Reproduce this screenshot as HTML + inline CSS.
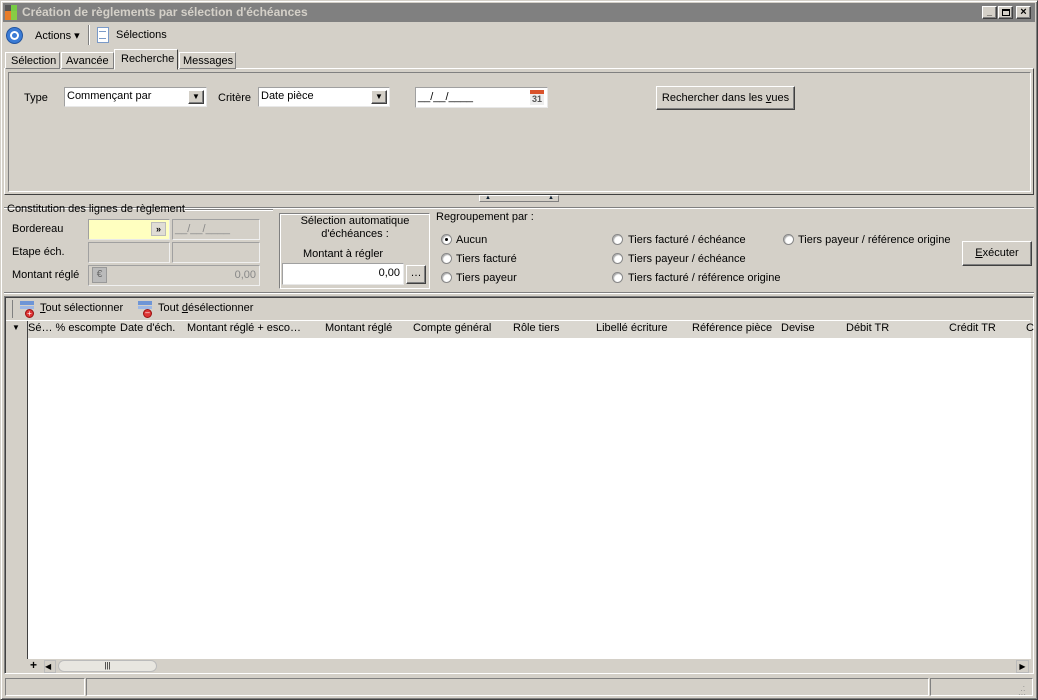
<!DOCTYPE html>
<html><head><meta charset="utf-8"><style>
*{box-sizing:border-box;margin:0;padding:0}
body{width:1038px;height:700px;background:#d4d0c8;font:11px "Liberation Sans",Tahoma,sans-serif;color:#000;position:relative;overflow:hidden}
.a{position:absolute}
.sunk{border:1px solid;border-color:#808080 #fff #fff #808080}
.rais{border:1px solid;border-color:#fff #808080 #808080 #fff}
.btn{border:1px solid;border-color:#fff #404040 #404040 #fff;box-shadow:inset -1px -1px 0 #808080;text-align:center;background:#d4d0c8}
.inp{background:#fff;border:1px solid #d4d0c8;border-color:#a0a0a0 #e8e8e8 #e8e8e8 #a0a0a0}
.dis{border:1px solid;border-color:#a0a0a0 #f0f0f0 #f0f0f0 #a0a0a0}
.rad{width:11px;height:11px;border-radius:50%;background:#fff;border:1px solid #888;box-shadow:inset 1px 1px 1px #aaa}
.t{white-space:nowrap}
</style></head><body>
<!-- window frame -->
<div class="a" style="left:0;top:0;width:1038px;height:700px;border:1px solid;border-color:#d4d0c8 #404040 #404040 #d4d0c8;box-shadow:inset 1px 1px 0 #fff,inset -1px -1px 0 #808080"></div>
<!-- title -->
<div class="a" style="left:3px;top:3px;width:1032px;height:19px;background:#808080"></div>
<div class="a" style="left:5px;top:5px;width:6px;height:6px;background:#555"></div>
<div class="a" style="left:11px;top:5px;width:6px;height:6px;background:#7c4"></div>
<div class="a" style="left:5px;top:11px;width:6px;height:9px;background:#e77d2a"></div>
<div class="a" style="left:11px;top:11px;width:6px;height:9px;background:#8c4"></div>
<div class="a t" style="left:22px;top:5px;color:#d4d0c8;font-weight:bold;font-size:12px">Création de règlements par sélection d'échéances</div>
<div class="a btn" style="left:982px;top:6px;width:15px;height:13px;font-size:9px;line-height:10px;font-weight:bold">_</div>
<div class="a btn" style="left:998px;top:6px;width:15px;height:13px"><div class="a" style="left:3px;top:2px;width:8px;height:7px;border:1px solid #000;border-top-width:2px"></div></div>
<div class="a btn" style="left:1016px;top:6px;width:15px;height:13px;font-size:11px;line-height:11px;font-weight:bold">×</div>
<!-- toolbar -->
<div class="a" style="left:6px;top:27px;width:17px;height:17px;border-radius:50%;background:#3a7bd5;border:1px solid #2456a0"><div class="a" style="left:3px;top:3px;width:9px;height:9px;border-radius:50%;background:#fff"></div><div class="a" style="left:5px;top:5px;width:5px;height:5px;border-radius:50%;background:#3a7bd5"></div></div>
<div class="a t" style="left:35px;top:29px">Actions ▾</div>
<div class="a" style="left:88px;top:25px;width:2px;height:20px;border-left:1px solid #808080;border-right:1px solid #fff"></div>
<div class="a" style="left:97px;top:27px;width:12px;height:16px;background:#fff;border:1px solid #7a9ac8"></div>
<div class="a" style="left:99px;top:31px;width:7px;height:8px;border-top:1px solid #7a9ac8;border-bottom:1px solid #7a9ac8"></div>
<div class="a t" style="left:116px;top:29px">Sélections</div>
<!-- tabs -->
<div class="a" style="left:4px;top:68px;width:1030px;height:127px;border:1px solid;border-color:#fff #404040 #404040 #fff"></div>
<div class="a t rais" style="left:5px;top:52px;width:55px;height:17px;padding:2px 0 0 5px">Sélection</div>
<div class="a t rais" style="left:61px;top:52px;width:53px;height:17px;padding:2px 0 0 4px">Avancée</div>
<div class="a t" style="left:114px;top:49px;width:64px;height:21px;padding:3px 0 0 6px;background:#d4d0c8;border:1px solid;border-color:#fff #404040 transparent #fff">Recherche</div>
<div class="a t rais" style="left:179px;top:52px;width:57px;height:17px;padding:2px 0 0 3px">Messages</div>
<div class="a sunk" style="left:8px;top:72px;width:1023px;height:120px"></div>
<div class="a t" style="left:24px;top:92px">Type</div>
<div class="a inp" style="left:64px;top:87px;width:143px;height:20px;padding:2px 0 0 2px">Commençant par</div>
<div class="a btn" style="left:188px;top:90px;width:16px;height:14px;font-size:8px;line-height:12px">▼</div>
<div class="a t" style="left:218px;top:92px">Critère</div>
<div class="a inp" style="left:258px;top:87px;width:132px;height:20px;padding:2px 0 0 2px">Date pièce</div>
<div class="a btn" style="left:371px;top:90px;width:16px;height:14px;font-size:8px;line-height:12px">▼</div>
<div class="a inp" style="left:415px;top:87px;width:133px;height:21px;padding:3px 0 0 2px">__/__/____</div>
<div class="a" style="left:530px;top:90px;width:14px;height:15px;background:#eee;border-top:4px solid #d9532c;font-size:9px;font-weight:bold;color:#555;text-align:center;line-height:10px">31</div>
<div class="a btn t" style="left:656px;top:86px;width:139px;height:24px;line-height:22px">Rechercher dans les <u>v</u>ues</div>
<!-- splitter -->
<div class="a" style="left:4px;top:207px;width:1030px;height:2px;border-top:1px solid #808080;border-bottom:1px solid #fff"></div>
<div class="a" style="left:479px;top:195px;width:80px;height:7px;border:1px solid;border-color:#fff #808080 #808080 #fff;font-size:6px;color:#123;line-height:5px"><span class="a" style="left:5px">▲</span><span class="a" style="left:68px">▲</span></div>
<!-- constitution -->
<div class="a t" style="left:7px;top:203px">Constitution des lignes de règlement</div>
<div class="a" style="left:185px;top:209px;width:88px;height:2px;border-top:1px solid #808080;border-bottom:1px solid #fff"></div>
<div class="a t" style="left:12px;top:223px">Bordereau</div>
<div class="a" style="left:88px;top:219px;width:82px;height:21px;background:#ffffc0;border:1px solid #a0a0a0;border-right-color:#e8e8e8;border-bottom-color:#e8e8e8"></div>
<div class="a" style="left:151px;top:222px;width:15px;height:14px;background:#e0ddd5;border:1px solid #bbb;font-size:9px;line-height:12px;text-align:center;font-weight:bold">»</div>
<div class="a dis" style="left:172px;top:219px;width:88px;height:21px;padding:3px 0 0 2px;color:#888">__/__/____</div>
<div class="a t" style="left:12px;top:246px">Etape éch.</div>
<div class="a dis" style="left:88px;top:242px;width:82px;height:21px"></div>
<div class="a dis" style="left:172px;top:242px;width:88px;height:21px"></div>
<div class="a t" style="left:12px;top:269px">Montant réglé</div>
<div class="a dis" style="left:88px;top:265px;width:172px;height:21px;padding:3px 3px 0 0;text-align:right;color:#888">0,00</div>
<div class="a" style="left:92px;top:267px;width:15px;height:16px;background:#bbb;border:1px solid #999;color:#666;font-size:10px;text-align:center;line-height:14px">€</div>
<!-- auto selection -->
<div class="a" style="left:279px;top:213px;width:151px;height:76px;border:1px solid;border-color:#808080 #fff #fff #808080;box-shadow:1px 1px 0 #fff inset"></div>
<div class="a" style="left:280px;top:215px;width:150px;text-align:center;line-height:13px">Sélection automatique<br>d'échéances :</div>
<div class="a t" style="left:303px;top:248px">Montant à régler</div>
<div class="a inp" style="left:282px;top:263px;width:122px;height:22px;text-align:right;padding:3px 3px 0 0">0,00</div>
<div class="a btn" style="left:406px;top:265px;width:20px;height:19px;line-height:14px">…</div>
<!-- regroupement -->
<div class="a t" style="left:436px;top:211px">Regroupement par :</div>
<div class="a rad" style="left:441px;top:234px"><div class="a" style="left:3px;top:3px;width:3px;height:3px;background:#000;border-radius:50%"></div></div>
<div class="a t" style="left:456px;top:234px">Aucun</div>
<div class="a rad" style="left:441px;top:253px"></div><div class="a t" style="left:456px;top:253px">Tiers facturé</div>
<div class="a rad" style="left:441px;top:272px"></div><div class="a t" style="left:456px;top:272px">Tiers payeur</div>
<div class="a rad" style="left:612px;top:234px"></div><div class="a t" style="left:628px;top:234px">Tiers facturé / échéance</div>
<div class="a rad" style="left:612px;top:253px"></div><div class="a t" style="left:628px;top:253px">Tiers payeur / échéance</div>
<div class="a rad" style="left:612px;top:272px"></div><div class="a t" style="left:628px;top:272px">Tiers facturé / référence origine</div>
<div class="a rad" style="left:783px;top:234px"></div><div class="a t" style="left:798px;top:234px">Tiers payeur / référence origine</div>
<div class="a btn t" style="left:962px;top:241px;width:70px;height:25px;line-height:23px"><u>E</u>xécuter</div>
<div class="a" style="left:4px;top:292px;width:1030px;height:2px;border-top:1px solid #808080;border-bottom:1px solid #fff"></div>
<!-- grid -->
<div class="a" style="left:4px;top:296px;width:1030px;height:378px;border:1px solid;border-color:#808080 #fff #fff #808080;box-shadow:inset 1px 1px 0 #404040"></div>
<div class="a" style="left:12px;top:300px;width:1px;height:18px;border-left:1px solid #808080"></div>
<div class="a" style="left:6px;top:320px;width:1024px;height:1px;background:#fff"></div>
<div class="a" style="left:20px;top:301px;width:14px;height:4px;background:#6e95d6"></div>
<div class="a" style="left:20px;top:306px;width:14px;height:3px;background:#9db8e6"></div>
<div class="a" style="left:25px;top:309px;width:9px;height:9px;border-radius:50%;background:#d33;border:1px solid #911;color:#fff;font-size:8px;line-height:7px;text-align:center">+</div>
<div class="a t" style="left:40px;top:302px"><u>T</u>out sélectionner</div>
<div class="a" style="left:138px;top:301px;width:14px;height:4px;background:#6e95d6"></div>
<div class="a" style="left:138px;top:306px;width:14px;height:3px;background:#9db8e6"></div>
<div class="a" style="left:143px;top:309px;width:9px;height:9px;border-radius:50%;background:#d33;border:1px solid #911;color:#fff;font-size:8px;line-height:6px;text-align:center">–</div>
<div class="a t" style="left:158px;top:302px">Tout <u>d</u>ésélectionner</div>
<div class="a" style="left:28px;top:321px;width:1002px;height:17px;background:#dad7d0"></div>
<div class="a" style="left:27px;top:321px;width:1px;height:338px;background:#404040"></div>
<div class="a" style="left:12px;top:323px;font-size:8px">▼</div>
<div class="a t" style="left:28px;top:322px">Sé… % escompte</div>
<div class="a t" style="left:120px;top:322px">Date d'éch.</div>
<div class="a t" style="left:187px;top:322px">Montant réglé + esco…</div>
<div class="a t" style="left:325px;top:322px">Montant réglé</div>
<div class="a t" style="left:413px;top:322px">Compte général</div>
<div class="a t" style="left:513px;top:322px">Rôle tiers</div>
<div class="a t" style="left:596px;top:322px">Libellé écriture</div>
<div class="a t" style="left:692px;top:322px">Référence pièce</div>
<div class="a t" style="left:781px;top:322px">Devise</div>
<div class="a t" style="left:846px;top:322px">Débit TR</div>
<div class="a t" style="left:949px;top:322px">Crédit TR</div>
<div class="a t" style="left:1026px;top:322px">C</div>
<div class="a" style="left:28px;top:338px;width:1003px;height:321px;background:#fff"></div>
<div class="a" style="left:28px;top:659px;width:1003px;height:14px;background:#d4d0c8"></div>
<div class="a t" style="left:30px;top:658px;font-size:12px;font-weight:bold">+</div>
<div class="a" style="left:44px;top:660px;width:12px;height:13px;border:1px solid #bbb;font-size:8px;line-height:11px">◀</div>
<div class="a" style="left:58px;top:660px;width:99px;height:12px;border:1px solid #bbb;border-radius:6px;background:#e8e6e0;font-size:8px;text-align:center;line-height:10px">|||</div>
<div class="a" style="left:1016px;top:660px;width:13px;height:13px;border:1px solid #bbb;font-size:8px;line-height:11px;text-align:center">▶</div>
<!-- status -->
<div class="a sunk" style="left:5px;top:678px;width:80px;height:18px"></div>
<div class="a sunk" style="left:86px;top:678px;width:843px;height:18px"></div>
<div class="a sunk" style="left:930px;top:678px;width:103px;height:18px"></div>
<div class="a" style="left:1018px;top:685px;color:#888;font-size:8px;line-height:4px">&nbsp;&nbsp;·<br>&nbsp;··<br>···</div>
</body></html>
